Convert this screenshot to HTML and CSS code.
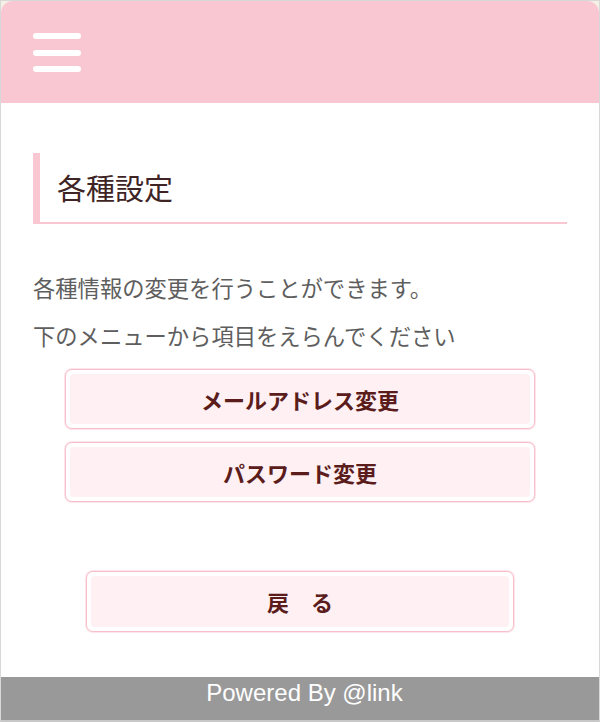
FILE: index.html
```html
<!DOCTYPE html>
<html lang="ja">
<head>
<meta charset="utf-8">
<title>各種設定</title>
<link rel="stylesheet" href="styles.css">
</head>
<body>
<div class="frame">
  <header class="header">
    <div class="burger"><span></span><span></span><span></span></div>
  </header>
  <main class="main">
    <h2 class="title">各種設定</h2>
    <p class="lead">各種情報の変更を行うことができます。</p>
    <p class="lead lead-2">下のメニューから項目をえらんでください</p>
    <div class="menu">
      <a class="btn"><span class="btn-in">メールアドレス変更</span></a>
      <a class="btn"><span class="btn-in">パスワード変更</span></a>
    </div>
    <a class="btn btn-back"><span class="btn-in">戻　る</span></a>
  </main>
  <footer class="footer">Powered By @link</footer>
</div>
</body>
</html>
```
FILE: styles.css
```css
html, body {
  margin: 0;
  padding: 0;
  background: #ffffff;
}
body {
  font-family: "Noto Sans CJK JP", "Noto Sans", sans-serif;
}
.frame {
  box-sizing: border-box;
  width: 600px;
  height: 722px;
  border: 1px solid #d8d8d8;
  border-bottom: 2px solid #c8c8c8;
  background: #f4f0e6;
  display: flex;
  flex-direction: column;
}
.header {
  height: 102px;
  flex: none;
  box-sizing: border-box;
  background: #f9c7d2;
  border-radius: 12px 12px 0 0;
  padding: 32px 0 0 32px;
}
.burger {
  display: flex;
  flex-direction: column;
  gap: 10.5px;
  width: 48px;
}
.burger span {
  display: block;
  height: 6px;
  border-radius: 3px;
  background: #ffffff;
}
.main {
  flex: 1;
  background: #ffffff;
  padding: 50px 32px 0 32px;
  display: flex;
  flex-direction: column;
}
.title {
  margin: 0;
  height: 69px;
  box-sizing: content-box;
  border-left: 7px solid #f9c7d2;
  border-bottom: 2px solid #f9c7d2;
  padding: 0 0 0 17px;
  font-size: 29px;
  font-weight: normal;
  line-height: 69px;
  color: #3e2424;
}
.lead {
  margin: 47px 0 0 0;
  font-size: 22.3px;
  line-height: 32px;
  color: #5e5e5e;
}
.lead-2 {
  margin-top: 16px;
}
.menu {
  margin: 18px 32px 0 32px;
  display: flex;
  flex-direction: column;
  gap: 13px;
}
.btn {
  display: block;
  box-sizing: border-box;
  height: 60px;
  border: 1px solid #f6bfcb;
  border-radius: 7px;
  box-shadow: 0 0 0 1px #fde5eb;
  background: #ffffff;
  padding: 4px;
  text-decoration: none;
}
.btn-in {
  display: block;
  height: 100%;
  border-radius: 4px;
  background: #fff0f3;
  text-align: center;
  font-size: 22px;
  font-weight: bold;
  line-height: 50px;
  color: #5b1c1c;
}
.btn-back {
  margin: 69px 53px 0 53px;
  height: 61px;
}
.btn-back .btn-in {
  line-height: 51px;
}
.footer {
  flex: none;
  height: 43px;
  background: #999999;
  color: #ffffff;
  text-align: center;
  font-family: "Liberation Sans", Arial, sans-serif;
  font-size: 24px;
  line-height: 32px;
  padding-left: 9px;
}
```
